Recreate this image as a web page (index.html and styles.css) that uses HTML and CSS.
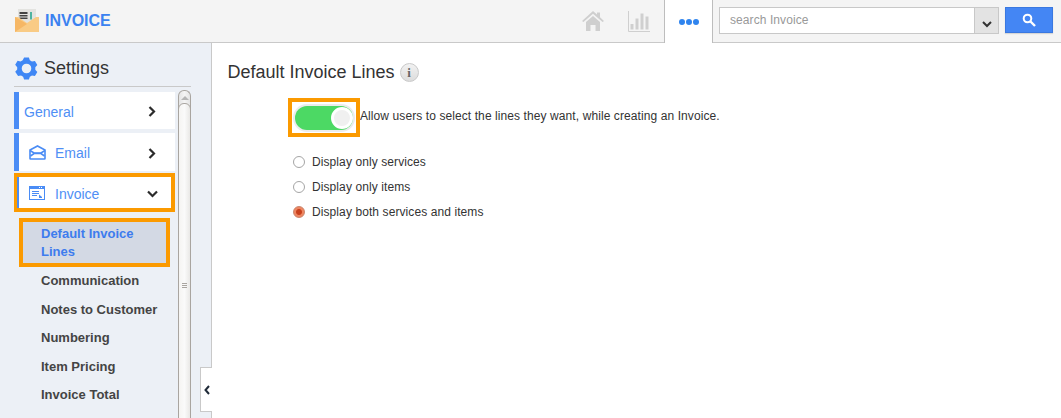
FILE: index.html
```html
<!DOCTYPE html>
<html lang="en">
<head>
<meta charset="utf-8">
<title>Invoice Settings</title>
<link rel="stylesheet" href="styles.css">
</head>
<body>
<header class="topbar">
  <div class="brand">
    <svg class="brand-icon" width="24" height="23" viewBox="0 0 24 23">
      <rect x="3" y="0" width="18" height="15" fill="#e3e3e0"/>
      <rect x="4.500" y="3" width="8" height="2" fill="#444"/>
      <rect x="4.500" y="6" width="8" height="1.500" fill="#444"/>
      <rect x="4.500" y="8.500" width="8" height="1.500" fill="#444"/>
      <rect x="15" y="3" width="2" height="7.500" fill="#4fb3a0"/>
      <path d="M0 8 L3 8 L12 14 L21 8 L24 8 V23 H0 Z" fill="#f9cb85"/>
      <path d="M0 23 L12 15 L0 8 Z" fill="#f6b765"/>
    </svg>
    <span class="brand-name">INVOICE</span>
  </div>
  <div class="top-icons">
    <svg class="home" width="22" height="20" viewBox="0 0 22 20"><path d="M11 0 L15 3.500 V1.500 H18 V6.200 L22 10 L20.500 11 L11 2.800 L1.500 11 L0 10 Z M4 11 L11 5 L18 11 V20 H13.500 V14 H8.500 V20 H4 Z" fill="#cfcfcf"/></svg>
    <svg class="chart" width="22" height="22" viewBox="0 0 22 22"><path d="M0.500 0 V20.500 H22" fill="none" stroke="#cfcfcf"/><rect x="2.500" y="13" width="3" height="5.500" fill="#cfcfcf"/><rect x="7.500" y="7.500" width="3" height="11" fill="#cfcfcf"/><rect x="12.500" y="2.500" width="3" height="16" fill="#cfcfcf"/><rect x="17.500" y="5.500" width="3" height="13" fill="#cfcfcf"/></svg>
  </div>
  <div class="more-tab"><i></i><i></i><i></i></div>
  <div class="search">
    <div class="search-box">
      <span class="search-text">search Invoice</span>
      <span class="search-drop"><svg width="10" height="7" viewBox="0 0 10 7"><path d="M1 1 L5 5 L9 1" fill="none" stroke="#333" stroke-width="2"/></svg></span>
    </div>
    <button class="search-btn" type="button"><svg width="14" height="14" viewBox="0 0 14 14"><circle cx="5.500" cy="5.500" r="3.800" fill="none" stroke="#fff" stroke-width="2"/><path d="M8.500 8.500 L13 13" stroke="#fff" stroke-width="2.400"/></svg></button>
  </div>
</header>
<div class="layout">
  <aside class="sidebar">
    <div class="side-title">
      <svg width="23" height="23" viewBox="0 0 24 24"><path fill="#3f87f5" fill-rule="evenodd" d="M9.500 0.500h5l1 3 2.200 1.300 3.100-.7 2.500 4.300-2.100 2.400v2.400l2.100 2.400-2.500 4.300-3.100-.7-2.200 1.300-1 3h-5l-1-3-2.200-1.300-3.100.7L.200 15.400l2.100-2.400v-2.400L.200 8.200l2.500-4.300 3.100.7L8 3.500zM12 7a5 5 0 1 0 0 10 5 5 0 0 0 0-10z"/></svg>
      <span>Settings</span>
    </div>
    <div class="side-body">
      <nav class="side-nav">
        <a class="nav-item"><span class="nav-label">General</span><svg class="chev" width="8" height="11" viewBox="0 0 8 11"><path d="M1.500 1 L6 5.500 L1.500 10" fill="none" stroke="#2b2b2b" stroke-width="2.200"/></svg></a>
        <a class="nav-item nav-email">
          <svg class="nav-icon" width="17" height="15" viewBox="0 0 17 15"><path d="M1 5 L8.500 1 L16 5 V13.500 Q16 14 15.500 14 H1.500 Q1 14 1 13.500 Z" fill="none" stroke="#4a8cf5" stroke-width="1.600"/><path d="M1 5.500 L5 8 H12 L16 5.500" fill="none" stroke="#4a8cf5" stroke-width="1.600"/><path d="M1.500 11 L5 8.500 H12 L15.500 11" fill="none" stroke="#4a8cf5" stroke-width="1.600"/></svg>
          <span class="nav-label">Email</span><svg class="chev" width="8" height="11" viewBox="0 0 8 11"><path d="M1.500 1 L6 5.500 L1.500 10" fill="none" stroke="#2b2b2b" stroke-width="2.200"/></svg></a>
        <a class="nav-item nav-invoice">
          <svg class="nav-icon" width="16" height="14" viewBox="0 0 16 14"><rect x="0.500" y="0.500" width="15" height="13" fill="#fff" stroke="#4a8cf5"/><rect x="0.500" y="0.500" width="15" height="2.500" fill="#4a8cf5"/><path d="M10 1.500 H11 M12 1.500 H13" stroke="#fff"/><path d="M3 5.500 H10 M3 7.500 H10 M3 9.500 H8" stroke="#4a8cf5"/><path d="M10 8.500 L13 11 V12 H10 Z" fill="#4a8cf5"/></svg>
          <span class="nav-label">Invoice</span><svg class="chev-down" width="11" height="8" viewBox="0 0 11 8"><path d="M1 1.500 L5.500 6 L10 1.500" fill="none" stroke="#2b2b2b" stroke-width="2.200"/></svg></a>
        <ul class="sub-nav">
          <li class="sub-active">Default Invoice Lines</li>
          <li>Communication</li>
          <li>Notes to Customer</li>
          <li>Numbering</li>
          <li>Item Pricing</li>
          <li>Invoice Total</li>
        </ul>
      </nav>
      <div class="scrollbar">
        <span class="scroll-up"></span>
        <span class="scroll-thumb"><i></i><i></i><i></i></span>
      </div>
    </div>
    <div class="collapse"><svg width="6" height="10" viewBox="0 0 6 10"><path d="M5 1 L1.500 5 L5 9" fill="none" stroke="#1f2a38" stroke-width="2"/></svg></div>
  </aside>
  <main class="content">
    <h1 class="page-title">Default Invoice Lines <span class="info">i</span></h1>
    <div class="toggle-row">
      <div class="toggle-frame"><span class="toggle"><span class="knob"></span></span></div>
      <span class="toggle-text">Allow users to select the lines they want, while creating an Invoice.</span>
    </div>
    <div class="radios">
      <div class="radio-row"><span class="radio"></span>Display only services</div>
      <div class="radio-row"><span class="radio"></span>Display only items</div>
      <div class="radio-row"><span class="radio radio-on"></span>Display both services and items</div>
    </div>
  </main>
</div>
</body>
</html>
```
FILE: styles.css
```css
* { box-sizing: border-box; }
html, body { margin: 0; height: 100%; overflow: hidden; }
body { font-family: "Liberation Sans", Arial, sans-serif; color: #333; background: #fff; width: 1061px; height: 418px; }

.topbar { height: 43px; background: #f4f4f4; border-bottom: 1px solid #c9c9c9; display: flex; align-items: stretch; }
.brand { width: 580px; display: flex; align-items: center; padding-left: 15px; }
.brand-icon { margin-top: -1px; }
.brand-name { margin-left: 6px; font-size: 16px; font-weight: 700; color: #3b82f0; }
.top-icons { width: 84px; display: flex; align-items: center; padding-left: 2px; gap: 24px; }
.top-icons .chart { margin-top: 2px; }
.top-icons .home { margin-top: -1px; }
.more-tab { width: 49px; background: #fff; border-left: 1px solid #bdbdbd; border-right: 1px solid #bdbdbd; height: 43px; display: flex; align-items: center; justify-content: center; gap: 1px; }
.more-tab i { width: 6px; height: 6px; border-radius: 50%; background: #2f84ee; }
.search { display: flex; align-items: flex-start; padding: 7px 0 0 6px; }
.search-box { width: 280px; height: 27px; border: 1px solid #c8c8c8; background: #fff; display: flex; }
.search-text { flex: 1; font-size: 12px; letter-spacing: .08px; color: #999; line-height: 25px; padding-left: 10px; }
.search-drop { width: 24px; background: #e3e3e3; border-left: 1px solid #c8c8c8; display: flex; align-items: center; justify-content: center; padding-top: 8px; }
.search-btn { width: 48px; height: 26px; margin-left: 6px; border: 1px solid #3a78e0; background: #4486f4; padding: 0; display: flex; align-items: center; justify-content: center; box-shadow: 0 1px 1px rgba(0,0,0,.12); }

.layout { display: flex; height: 375px; }
.sidebar { position: relative; width: 212px; background: #ecf0f6; border-right: 1px solid #c9c9c9; padding: 0 0 0 14px; flex: none; }
.side-title { height: 44px; width: 177px; border-bottom: 1px solid #c9c9c9; display: flex; align-items: center; gap: 6px; font-size: 18px; color: #333; padding: 7px 0 0 1px; }
.side-body { display: flex; height: 331px; overflow: hidden; padding-top: 3px; }
.side-nav { width: 161px; flex: none; padding-top: 2px; }
.nav-item { height: 37px; display: flex; align-items: center; background: #fff; border-left: 5px solid #4a8cf5; margin-bottom: 4px; padding-left: 5px; font-size: 14px; color: #4f8ff5; }
.nav-label { flex: 1; padding-top: 2px; }
.chev { margin-right: 19px; margin-top: 2px; }
.nav-email { height: 38px; }
.nav-email .nav-icon { margin: 0 9px 0 5px; }
.nav-invoice { height: 39px; width: 162px; margin: -2px 0 0 -1px; border: 4px solid #fb9a00; box-shadow: inset 2px 0 0 #4a8cf5; padding-left: 8px; }
.nav-invoice .nav-icon { margin-right: 10px; margin-left: 4px; }
.chev-down { margin-right: 13px; margin-top: 3px; }
.sub-nav { list-style: none; margin: 6px 0 0; padding: 0; font-size: 13px; font-weight: 700; color: #444; }
.sub-nav li { padding-left: 27px; height: 28.600px; line-height: 28.600px; }
.sub-nav .sub-active { margin: 0 0 0 5px; width: 151px; height: 49px; background: #d3d9e4; border: 4px solid #fb9a00; color: #3d7cee; line-height: 18px; padding: 3px 10px 0 18px; }
.scrollbar { width: 13px; margin-left: 3px; height: 100%; background: linear-gradient(90deg, #e4e4e4, #f4f4f4 50%, #e4e4e4); border: 1px solid #a9a5a0; border-bottom: 0; border-radius: 6px 6px 0 0; position: relative; }
.scroll-up { display: block; width: 0; margin: 5px auto 0; border: 4px solid transparent; border-top: 0; border-bottom: 4px solid #b5b5b5; }
.scroll-thumb { display: flex; flex-direction: column; gap: 1px; align-items: center; justify-content: center; position: absolute; top: 12px; left: -1px; right: -1px; height: 364px; background: linear-gradient(90deg, #f5f4f2, #fafafa 50%, #e9e8e6); border: 1px solid #a9a5a0; border-radius: 6px 6px 0 0; }
.scroll-thumb i { width: 5px; height: 1px; background: #a9a5a0; }
.collapse { position: absolute; left: 200px; top: 324px; width: 12px; height: 45px; background: #fff; border: 1px solid #c9c9c9; border-right: 0; display: flex; align-items: center; justify-content: center; }

.content { flex: 1; padding: 19px 0 0 15.500px; font-size: 12px; letter-spacing: .09px; color: #333; }
.page-title { margin: 0; font-size: 18px; font-weight: 400; letter-spacing: 0; height: 21px; line-height: 21px; display: flex; align-items: center; gap: 5px; color: #333; }
.info { width: 19px; height: 19px; border-radius: 50%; background: linear-gradient(#f2f2f2, #dcdcdc); border: 1px solid #c9c9c9; font-size: 13px; font-weight: 700; color: #666; display: flex; align-items: center; justify-content: center; font-family: "Liberation Serif", serif; }
.toggle-row { display: flex; align-items: center; margin: 15px 0 0 60.500px; }
.toggle-frame { width: 72px; height: 39px; border: 4px solid #fb9a00; background: #fff; display: flex; align-items: center; justify-content: center; }
.toggle { width: 58px; height: 24px; border-radius: 12px; background: #4cd964; box-shadow: 0 0 0 2px #ececec; position: relative; display: block; }
.knob { position: absolute; right: 0; top: 1px; width: 22px; height: 22px; border-radius: 50%; background: #f0f0f0; border: 3px solid #fff; }
.toggle-text { padding-bottom: 4px; }
.radios { margin: 12px 0 0 65.500px; }
.radio-row { display: flex; align-items: center; height: 25px; }
.radio { width: 12px; height: 12px; border-radius: 50%; border: 1px solid #a5a5a5; background: #fff; margin-right: 7px; }
.radio-on { background: radial-gradient(circle, #c8401c 0 2.500px, #ee8560 3.500px); border-color: #c9846c; }
```
